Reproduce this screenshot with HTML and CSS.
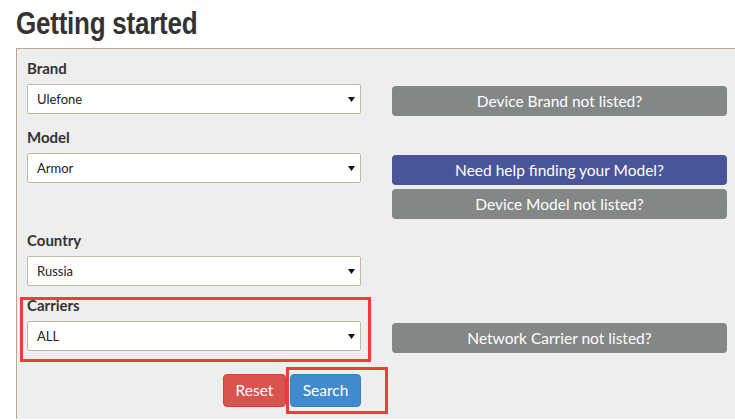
FILE: index.html
```html
<!DOCTYPE html>
<html>
<head>
<meta charset="utf-8">
<link rel="stylesheet" href="styles.css">
</head>
<body>
<h1 class="title"><span class="title-text">Getting started</span></h1>
<div class="panel">
  <div class="row row-a">
    <div class="group">
      <label class="lbl">Brand</label>
      <div class="sel"><span class="sel-text">Ulefone</span><svg class="caret" width="7" height="5" viewBox="0 0 7 5"><path d="M0 0H7L3.5 5Z" fill="#111"/></svg></div>
    </div>
    <div class="side">
      <div class="btn btn-gray">Device Brand not listed?</div>
    </div>
  </div>
  <div class="row row-a">
    <div class="group">
      <label class="lbl">Model</label>
      <div class="sel"><span class="sel-text">Armor</span><svg class="caret" width="7" height="5" viewBox="0 0 7 5"><path d="M0 0H7L3.5 5Z" fill="#111"/></svg></div>
    </div>
    <div class="side">
      <div class="btn btn-indigo">Need help finding your Model?</div>
      <div class="btn btn-gray">Device Model not listed?</div>
    </div>
  </div>
  <div class="row row-b">
    <div class="group">
      <label class="lbl">Country</label>
      <div class="sel"><span class="sel-text">Russia</span><svg class="caret" width="7" height="5" viewBox="0 0 7 5"><path d="M0 0H7L3.5 5Z" fill="#111"/></svg></div>
    </div>
    <div class="side"></div>
  </div>
  <div class="row row-c">
    <div class="group group-mark">
      <span class="mark mark-carrier"></span>
      <label class="lbl">Carriers</label>
      <div class="sel"><span class="sel-text">ALL</span><svg class="caret" width="7" height="5" viewBox="0 0 7 5"><path d="M0 0H7L3.5 5Z" fill="#111"/></svg></div>
    </div>
    <div class="side">
      <div class="btn btn-gray">Network Carrier not listed?</div>
    </div>
  </div>
  <div class="actions">
    <div class="abtn abtn-reset">Reset</div>
    <div class="abtn abtn-search"><span class="mark mark-search"></span>Search</div>
  </div>
</div>
</body>
</html>
```
FILE: styles.css
```css
html, body {
  margin: 0;
  padding: 0;
  background: #ffffff;
  overflow: hidden;
}
body {
  width: 735px;
  height: 420px;
  font-family: Lato, "Open Sans", sans-serif;
  color: #333333;
}
.title {
  margin: 6px 0 6px 16px;
  font-family: "Liberation Sans", Arial, sans-serif;
  font-weight: bold;
  font-size: 31px;
  line-height: 36px;
  color: #333333;
  letter-spacing: -0.3px;
}
.title-text {
  display: inline-block;
  transform: scaleX(0.84);
  transform-origin: 0 50%;
}
.panel {
  margin-left: 16px;
  margin-right: -20px;
  background: #eeeeee;
  border: 1px solid #b5ac8d;
  border-bottom: none;
  padding: 9px 0 12px 10px;
}
.row {
  display: flex;
  gap: 31px;
}
.row-a { margin-bottom: 11px; }
.row-b { margin-bottom: 9px; }
.row-c { margin-bottom: 21px; }
.group {
  width: 334px;
  display: flex;
  flex-direction: column;
}
.group-mark { position: relative; }
.lbl {
  font-weight: bold;
  font-size: 15px;
  line-height: 20px;
  margin-bottom: 6px;
  color: #333333;
}
.sel {
  position: relative;
  box-sizing: border-box;
  height: 30px;
  background: #ffffff;
  border: 1px solid #c3ba9d;
  border-radius: 2px;
  display: flex;
  align-items: center;
  padding-left: 9px;
  font-size: 13px;
  color: #222222;
}
.caret {
  position: absolute;
  right: 5px;
  top: 12px;
}
.side {
  width: 335px;
  padding-top: 28px;
  display: flex;
  flex-direction: column;
  gap: 4px;
}
.btn {
  height: 30px;
  border-radius: 4px;
  color: #ffffff;
  font-size: 15.5px;
  line-height: 30px;
  text-align: center;
}
.btn-gray { background: #838786; }
.btn-indigo { background: #4a5499; }
.actions {
  width: 334px;
  display: flex;
  justify-content: flex-end;
  gap: 4px;
}
.abtn {
  position: relative;
  box-sizing: border-box;
  height: 33px;
  line-height: 31px;
  border-radius: 4px;
  color: #ffffff;
  font-size: 15.5px;
  text-align: center;
}
.abtn-reset {
  width: 63px;
  background: #d9534f;
  border: 1px solid #d43f3a;
}
.abtn-search {
  width: 71px;
  background: #418ace;
  border: 1px solid #3a7fc0;
}
.mark {
  position: absolute;
  border: 3px solid #f33b3b;
  pointer-events: none;
}
.mark-carrier {
  left: -7px;
  right: -10px;
  top: 2px;
  bottom: -9px;
}
.mark-search {
  left: -5px;
  right: -28px;
  top: -8px;
  bottom: -8px;
}
```
